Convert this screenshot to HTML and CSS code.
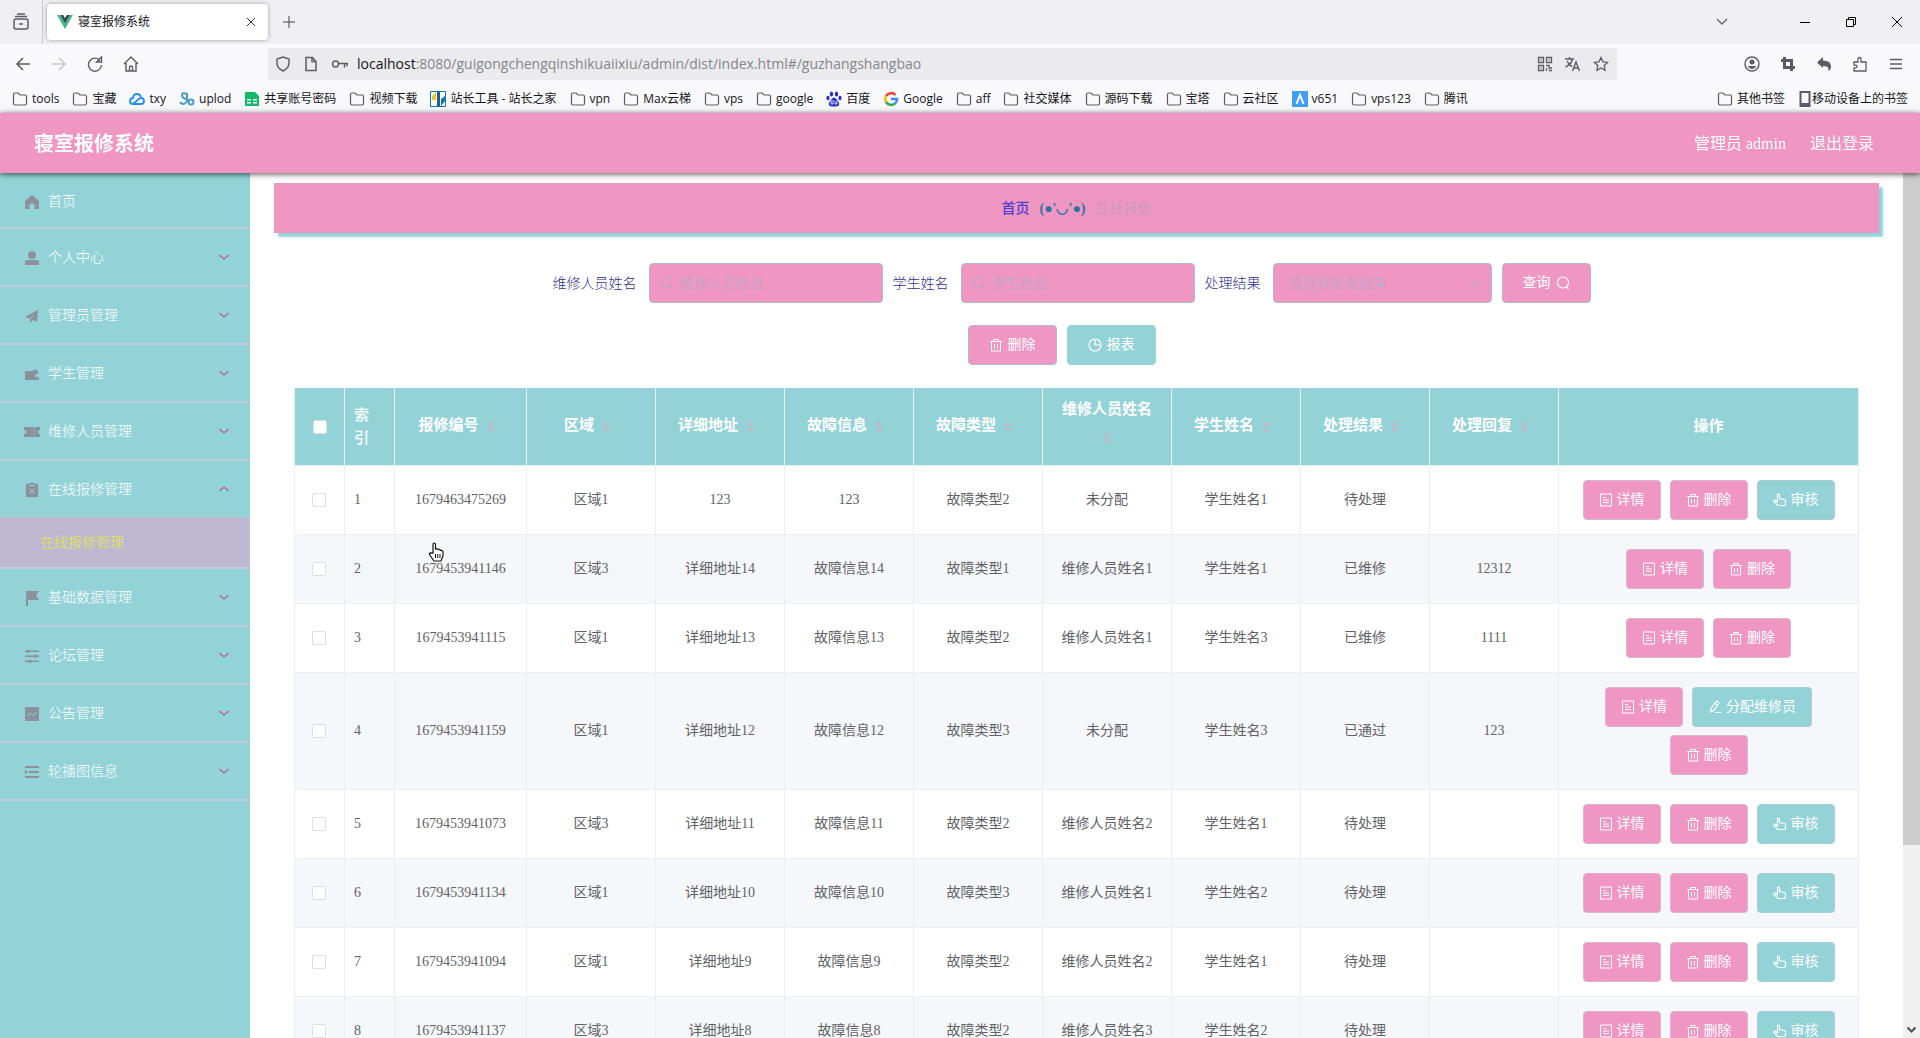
FILE: index.html
```html
<!DOCTYPE html>
<html lang="zh-CN">
<head>
<meta charset="utf-8">
<title>寝室报修系统</title>
<link rel="stylesheet" href="styles.css">
</head>
<body>
<svg class="sprite" aria-hidden="true">
  <symbol id="folder" viewBox="0 0 16 16"><path d="M1.500 3.500q0-1.500 1.500-1.500h3l2 2h5q1.500 0 1.500 1.500v7q0 1.500-1.500 1.500h-10q-1.500 0-1.500-1.500z" fill="none" stroke="#5b5b66" stroke-width="1.200"/></symbol>
  <symbol id="detail" viewBox="0 0 14 14"><path d="M1.500 1h11v12h-11zM4 4.500h3M4 7h6M4 9.500h6" fill="none" stroke="currentColor"/></symbol>
  <symbol id="trash" viewBox="0 0 14 14"><path d="M1 3.500h12M4.500 3V1.500h5V3M2.500 3.500V13h9V3.500M5.500 6v4.500M8.500 6v4.500" fill="none" stroke="currentColor"/></symbol>
  <symbol id="point" viewBox="0 0 14 14"><path d="M4.500 9.500V2q0-1 1-1t1 1v3.500l5 1q1 .3 1 1.300v3q0 1.700-1.700 1.700H6q-1.500 0-2.300-1.200L1 8.500q-.3-1 .6-1.300.8-.2 1.500.4l1.400 1.900" fill="none" stroke="currentColor" stroke-width="1.200"/></symbol>
  <symbol id="edit" viewBox="0 0 14 14"><path d="M3 8.500l5-7q.5-.6 1.200-.2l1.300 1q.6.500.2 1.200l-5 7L2.500 12zM7 3.500l2.500 2M7 12.500h6" fill="none" stroke="currentColor" stroke-width="1.200"/></symbol>
  <symbol id="pie" viewBox="0 0 14 14"><circle cx="7" cy="7" r="6" fill="none" stroke="currentColor" stroke-width="1.200"/><path d="M7 1v6h6" fill="none" stroke="currentColor" stroke-width="1.200"/></symbol>
  <symbol id="search" viewBox="0 0 14 14"><circle cx="7" cy="6.500" r="5.500" fill="none" stroke="currentColor" stroke-width="1.200"/><path d="M10 10.500l2.500 2.500" stroke="currentColor" stroke-width="1.200"/></symbol>
  <symbol id="down" viewBox="0 0 12 12"><path d="M1.500 4l4.500 4 4.500-4" fill="none" stroke="currentColor" stroke-width="1.300"/></symbol>
  <symbol id="up" viewBox="0 0 12 12"><path d="M1.500 8L6 4l4.500 4" fill="none" stroke="currentColor" stroke-width="1.300"/></symbol>
  <symbol id="sort" viewBox="0 0 10 14"><path d="M5 1l4 5H1zM5 13l4-5H1z" fill="currentColor"/></symbol>
</svg>

<div class="shell">
  <div class="tabs">
    <button class="ico recent" aria-label="最近标签"><svg width="16" height="18" viewBox="0 0 16 18" fill="none" stroke="#5b5b66" stroke-width="1.500"><rect x="1" y="6" width="14" height="10" rx="2"/><path d="M2 3.500h12M4 1h8M6 11h4"/></svg></button>
    <div class="tab">
      <svg width="16" height="16" viewBox="0 0 16 16"><path d="M0 1h3.200L8 9.500 12.800 1H16L8 15z" fill="#41b883"/><path d="M3.200 1h3L8 4l1.800-3h3L8 9.500z" fill="#34495e"/></svg>
      <span class="tab-title">寝室报修系统</span>
      <button class="ico" aria-label="关闭标签"><svg width="10" height="10" viewBox="0 0 10 10"><path d="M1 1l8 8M9 1L1 9" stroke="#333"/></svg></button>
    </div>
    <button class="ico plus" aria-label="新标签"><svg width="12" height="12" viewBox="0 0 12 12"><path d="M6 0v12M0 6h12" stroke="#444"/></svg></button>
    <div class="window-keys">
      <button class="ico" aria-label="标签列表"><svg width="12" height="12" viewBox="0 0 12 12"><path d="M1 3l5 5 5-5" fill="none" stroke="#666" stroke-width="1.300"/></svg></button>
      <button class="ico wide" aria-label="最小化"><svg width="10" height="10" viewBox="0 0 10 10"><path d="M0 5.500h10" stroke="#000"/></svg></button>
      <button class="ico" aria-label="还原"><svg width="10" height="10" viewBox="0 0 10 10"><path d="M.5 2.500h7v7h-7zM2.500 2.500v-2h7v7h-2" fill="none" stroke="#000"/></svg></button>
      <button class="ico" aria-label="关闭"><svg width="10" height="10" viewBox="0 0 10 10"><path d="M0 0l10 10M10 0L0 10" stroke="#000"/></svg></button>
    </div>
  </div>

  <div class="toolbar">
    <div class="nav-keys">
      <button class="ico" aria-label="后退"><svg width="16" height="16" viewBox="0 0 16 16"><path d="M15 8H2M8 2L2 8l6 6" fill="none" stroke="#5b5b66" stroke-width="1.500"/></svg></button>
      <button class="ico" aria-label="前进"><svg width="16" height="16" viewBox="0 0 16 16"><path d="M1 8h13M8 2l6 6-6 6" fill="none" stroke="#c4c4ca" stroke-width="1.500"/></svg></button>
      <button class="ico" aria-label="刷新"><svg width="16" height="16" viewBox="0 0 16 16"><path d="M13 4.500A6.500 6.500 0 1 0 14.500 9M14.500 1v5h-5z" fill="none" stroke="#5b5b66" stroke-width="1.400"/></svg></button>
      <button class="ico" aria-label="主页"><svg width="16" height="16" viewBox="0 0 16 16"><path d="M1 8l7-7 7 7M3 7v8h10V7M6.500 15v-4q0-1 1.500-1t1.500 1v4" fill="none" stroke="#5b5b66" stroke-width="1.400"/></svg></button>
    </div>
    <div class="url">
      <svg width="16" height="16" viewBox="0 0 16 16"><path d="M8 1l6 2v4q0 5-6 8-6-3-6-8V3z" fill="none" stroke="#5b5b66" stroke-width="1.400"/></svg>
      <svg width="16" height="16" viewBox="0 0 16 16"><path d="M3 1.500h6.500l3.500 4v9H3zM9 1.500v4h4" fill="none" stroke="#5b5b66" stroke-width="1.500"/></svg>
      <svg width="18" height="16" viewBox="0 0 18 16"><circle cx="4.500" cy="8" r="3" fill="none" stroke="#5b5b66" stroke-width="1.400"/><path d="M7.500 7.500H17M13.500 7.500v4M16 7.500v3" stroke="#5b5b66" stroke-width="1.400"/></svg>
      <span class="address"><b>localhost</b>:8080/guigongchengqinshikuaiixiu/admin/dist/index.html#/guzhangshangbao</span>
      <svg width="16" height="16" viewBox="0 0 16 16" fill="none" stroke="#5b5b66" stroke-width="1.300"><path d="M1.500 1.500h5v5h-5zM9.500 1.500h5v5h-5zM1.500 9.500h5v5h-5zM3.500 4h1M11.500 4h1M3.500 12h1M9 9.500h3v2.500h3M9.500 12v3M12 14.500h3"/></svg>
      <svg width="16" height="16" viewBox="0 0 16 16" fill="none" stroke="#5b5b66" stroke-width="1.400"><path d="M0 3h9M4.500 1v2M7.500 3q-1 5-7 8M2 5q2 4 5 5.500M7.500 15l3.500-9 3.500 9M9 12h4"/></svg>
      <svg width="16" height="16" viewBox="0 0 16 16"><path d="M8 1.500l2 4.300 4.700.6-3.500 3.200.9 4.700L8 12l-4.100 2.300.9-4.700L1.300 6.400 6 5.800z" fill="none" stroke="#5b5b66" stroke-width="1.300"/></svg>
    </div>
    <div class="tools">
      <button class="ico" aria-label="账户"><svg width="16" height="16" viewBox="0 0 16 16"><circle cx="8" cy="8" r="7" fill="none" stroke="#5b5b66" stroke-width="1.400"/><circle cx="8" cy="6" r="2.500" fill="#5b5b66"/><path d="M4 10h8q-1 3-4 3t-4-3z" fill="#5b5b66"/></svg></button>
      <button class="ico" aria-label="截图"><svg width="16" height="16" viewBox="0 0 16 16"><path d="M4.500 1v10.500H15M1 4.500h10.500V15" fill="none" stroke="#5b5b66" stroke-width="3"/></svg></button>
      <button class="ico" aria-label="撤销"><svg width="16" height="16" viewBox="0 0 16 16"><path d="M1 6.500L7 1v3.500q8 0 8 6 0 3-3 4.500 2-5-5-5V12z" fill="#5b5b66"/></svg></button>
      <button class="ico" aria-label="扩展"><svg width="16" height="16" viewBox="0 0 16 16"><path d="M2 6h4V3q0-1.500 1.500-1.500T9 3v3h5v9H2v-3q3 0 3-1.500T2 9z" fill="none" stroke="#5b5b66" stroke-width="1.300"/></svg></button>
      <button class="ico" aria-label="菜单"><svg width="16" height="16" viewBox="0 0 16 16"><path d="M2 3.500h12M2 8h12M2 12.500h12" stroke="#5b5b66" stroke-width="1.300"/></svg></button>
    </div>
  </div>

  <nav class="bookmarks" aria-label="书签">
    <a href="#"><svg><use href="#folder"/></svg>tools</a>
    <a href="#"><svg><use href="#folder"/></svg>宝藏</a>
    <a href="#"><svg viewBox="0 0 16 16"><path d="M4 13q-3 0-3-3t3-3q.5-4 4-4t4 4q3 0 3 3t-3 3zL11 7" fill="none" stroke="#1e90ee" stroke-width="1.800"/></svg>txy</a>
    <a href="#"><svg viewBox="0 0 16 16" fill="none" stroke="#4a9cc8" stroke-width="2"><path d="M8 3Q3 1 3 4t4 4-2 5q-3 0-4-2"/><circle cx="12" cy="11" r="2.500"/><path d="M8 2v9"/></svg>uplod</a>
    <a href="#"><svg viewBox="0 0 16 16"><path d="M1 1h10l4 4v10H1z" fill="#13b96b"/><path d="M3 8h4v1.500H3zM9 8h4v1.500H9zM3 11h4v1.500H3zM9 11h4v1.500H9z" fill="#fff"/></svg>共享账号密码</a>
    <a href="#"><svg><use href="#folder"/></svg>视频下载</a>
    <a href="#"><svg viewBox="0 0 16 16"><path d="M.5.5h15v15H.5z" fill="#fff" stroke="#1673b4"/><path d="M2 5l4-4v8H2z" fill="#e5ce20"/><path d="M7 1h3v14H7z" fill="#1f5f8c"/><path d="M11 8l4-3v5l-4 5z" fill="#1673b4"/></svg>站长工具 - 站长之家</a>
    <a href="#"><svg><use href="#folder"/></svg>vpn</a>
    <a href="#"><svg><use href="#folder"/></svg>Max云梯</a>
    <a href="#"><svg><use href="#folder"/></svg>vps</a>
    <a href="#"><svg><use href="#folder"/></svg>google</a>
    <a href="#"><svg viewBox="0 0 16 16" fill="#2b32c8"><ellipse cx="5.500" cy="3" rx="1.700" ry="2.500"/><ellipse cx="10.500" cy="3" rx="1.700" ry="2.500"/><ellipse cx="2" cy="7" rx="1.600" ry="2.200"/><ellipse cx="14" cy="7" rx="1.600" ry="2.200"/><path d="M8 6.500q2 0 3 2.500l2 2.500q1 4-3 4H6q-4 0-3-4L5 9q1-2.500 3-2.500z"/><path d="M6 10h-1v3h2v-4M9 10v3h2v-3" fill="none" stroke="#fff" stroke-width=".8"/></svg>百度</a>
    <a href="#"><svg viewBox="0 0 16 16" fill="none" stroke-width="2.500"><path d="M12.500 4A6 6 0 0 0 3 5" stroke="#ea4335"/><path d="M3 5a6 6 0 0 0 0 6" stroke="#fbbc05"/><path d="M3 11a6 6 0 0 0 9 1.500" stroke="#34a853"/><path d="M12 12.500Q14 11 14 8H8" stroke="#4285f4"/></svg>Google</a>
    <a href="#"><svg><use href="#folder"/></svg>aff</a>
    <a href="#"><svg><use href="#folder"/></svg>社交媒体</a>
    <a href="#"><svg><use href="#folder"/></svg>源码下载</a>
    <a href="#"><svg><use href="#folder"/></svg>宝塔</a>
    <a href="#"><svg><use href="#folder"/></svg>云社区</a>
    <a href="#"><svg viewBox="0 0 16 16"><path d="M0 0h16v16H0z" fill="#3ea0ee"/><path d="M4.500 13L8 4l3.500 9" fill="none" stroke="#fff" stroke-width="2"/></svg>v651</a>
    <a href="#"><svg><use href="#folder"/></svg>vps123</a>
    <a href="#"><svg><use href="#folder"/></svg>腾讯</a>
    <a href="#" class="push"><svg><use href="#folder"/></svg>其他书签</a>
    <a href="#" class="phone"><svg viewBox="0 0 12 16"><path d="M1.500 1h9v14h-9z" fill="none" stroke="#5b5b66" stroke-width="2"/><path d="M1 12h10v3H1z" fill="#5b5b66"/></svg>移动设备上的书签</a>
  </nav>

  <header class="header">
    <h1>寝室报修系统</h1>
    <span class="user">管理员 admin</span>
    <a href="#" class="logout">退出登录</a>
  </header>

  <div class="body">
    <aside class="side">
      <ul class="menu">
        <li class="home"><a href="#"><svg viewBox="0 0 16 16"><path d="M8 1l7 6v8h-4.500v-4q0-1.500-2.500-1.500T5.500 11v4H1V7z"/></svg><span>首页</span></a></li>
        <li><a href="#"><svg viewBox="0 0 16 16"><circle cx="8" cy="5" r="4"/><path d="M1 15v-2q0-3 3-3h8q3 0 3 3v2z"/></svg><span>个人中心</span><svg class="arrow"><use href="#down"/></svg></a></li>
        <li><a href="#"><svg viewBox="0 0 16 16"><path d="M1 9L14 2l-1 12-4-2-3 3v-4l5-5-6 4.500z"/></svg><span>管理员管理</span><svg class="arrow"><use href="#down"/></svg></a></li>
        <li><a href="#"><svg viewBox="0 0 16 16"><path d="M1 5h8l2-2 3 2v3q-3-1-3 1.500t3 1.500h1v3H1z"/></svg><span>学生管理</span><svg class="arrow"><use href="#down"/></svg></a></li>
        <li><a href="#"><svg viewBox="0 0 16 16"><path d="M0 3h16v3q-2 0-2 2t2 2v3H0v-3q2 0 2-2T0 6z"/><path d="M10.500 3v10" stroke="#93d3d8" stroke-width=".5" stroke-dasharray="2 1"/></svg><span>维修人员管理</span><svg class="arrow"><use href="#down"/></svg></a></li>
        <li>
          <a href="#"><svg viewBox="0 0 16 16"><path d="M2 2h3V1h6v1h3v13H2z"/><path d="M5.500 6.500l5 5M10.500 6.500l-5 5M5 3.500h6" stroke="#93d3d8"/></svg><span>在线报修管理</span><svg class="arrow"><use href="#up"/></svg></a>
          <a href="#" class="sub">在线报修管理</a>
        </li>
        <li><a href="#"><svg viewBox="0 0 16 16"><path d="M2 1h13l-3 4 3 5H4v6H2z"/></svg><span>基础数据管理</span><svg class="arrow"><use href="#down"/></svg></a></li>
        <li><a href="#"><svg viewBox="0 0 16 16"><path d="M1 2.500h14v1.500H1zM1 7.500h14v1.500H1zM1 12.500h14V14H1z"/><circle cx="4" cy="3.200" r="1.700"/><circle cx="11" cy="8.200" r="1.700"/><circle cx="6" cy="13.200" r="1.700"/></svg><span>论坛管理</span><svg class="arrow"><use href="#down"/></svg></a></li>
        <li><a href="#"><svg viewBox="0 0 16 16"><path d="M1 1h14v14H1z"/><path d="M3.500 10l3-3 2.500 2.500L13 6" fill="none" stroke="#93d3d8"/></svg><span>公告管理</span><svg class="arrow"><use href="#down"/></svg></a></li>
        <li><a href="#"><svg viewBox="0 0 16 16"><path d="M1 2h14v2H1zM5 7h10v2H5zM1 6l3 2-3 2zM1 12h14v2H1z"/></svg><span>轮播图信息</span><svg class="arrow"><use href="#down"/></svg></a></li>
      </ul>
    </aside>

    <main class="main">
      <nav class="crumbs"><a href="#">首页</a><b>(●'◡'●)</b><span>在线报修</span></nav>
      <div class="content">
        <form class="filters">
          <label for="worker">维修人员姓名</label>
          <span class="field"><svg><use href="#search"/></svg><input id="worker" type="text" placeholder="维修人员姓名"></span>
          <label for="student">学生姓名</label>
          <span class="field"><svg><use href="#search"/></svg><input id="student" type="text" placeholder="学生姓名"></span>
          <label for="result">处理结果</label>
          <span class="field pick"><select id="result"><option>请选择处理结果</option></select><svg><use href="#down"/></svg></span>
          <button type="button" class="btn big">查询<svg><use href="#search"/></svg></button>
        </form>
        <div class="actions">
          <button class="btn big"><svg><use href="#trash"/></svg>删除</button>
          <button class="btn big teal"><svg><use href="#pie"/></svg>报表</button>
        </div>
        <table class="grid">
          <colgroup><col class="c-s"><col class="c-s"><col class="c-id"><col><col><col><col><col><col><col><col><col class="c-ops"></colgroup>
          <thead><tr>
            <th><input type="checkbox" aria-label="全选"></th><th class="idx">索引</th>
            <th>报修编号<i><svg><use href="#sort"/></svg></i></th><th>区域<i><svg><use href="#sort"/></svg></i></th><th>详细地址<i><svg><use href="#sort"/></svg></i></th><th>故障信息<i><svg><use href="#sort"/></svg></i></th><th>故障类型<i><svg><use href="#sort"/></svg></i></th><th>维修人员姓名<i><svg><use href="#sort"/></svg></i></th><th>学生姓名<i><svg><use href="#sort"/></svg></i></th><th>处理结果<i><svg><use href="#sort"/></svg></i></th><th>处理回复<i><svg><use href="#sort"/></svg></i></th><th>操作</th>
          </tr></thead>
          <tbody>
            <tr><td><input type="checkbox" aria-label="选择1"></td><td class="idx">1</td><td>1679463475269</td><td>区域1</td><td>123</td><td>123</td><td>故障类型2</td><td>未分配</td><td>学生姓名1</td><td>待处理</td><td></td><td><div class="ops"><button class="btn"><svg><use href="#detail"/></svg>详情</button><button class="btn"><svg><use href="#trash"/></svg>删除</button><button class="btn teal"><svg><use href="#point"/></svg>审核</button></div></td></tr>
            <tr><td><input type="checkbox" aria-label="选择2"></td><td class="idx">2</td><td>1679453941146</td><td>区域3</td><td>详细地址14</td><td>故障信息14</td><td>故障类型1</td><td>维修人员姓名1</td><td>学生姓名1</td><td>已维修</td><td>12312</td><td><div class="ops"><button class="btn"><svg><use href="#detail"/></svg>详情</button><button class="btn"><svg><use href="#trash"/></svg>删除</button></div></td></tr>
            <tr><td><input type="checkbox" aria-label="选择3"></td><td class="idx">3</td><td>1679453941115</td><td>区域1</td><td>详细地址13</td><td>故障信息13</td><td>故障类型2</td><td>维修人员姓名1</td><td>学生姓名3</td><td>已维修</td><td>1111</td><td><div class="ops"><button class="btn"><svg><use href="#detail"/></svg>详情</button><button class="btn"><svg><use href="#trash"/></svg>删除</button></div></td></tr>
            <tr><td><input type="checkbox" aria-label="选择4"></td><td class="idx">4</td><td>1679453941159</td><td>区域1</td><td>详细地址12</td><td>故障信息12</td><td>故障类型3</td><td>未分配</td><td>学生姓名3</td><td>已通过</td><td>123</td><td><div class="ops"><button class="btn"><svg><use href="#detail"/></svg>详情</button><button class="btn teal"><svg><use href="#edit"/></svg>分配维修员</button><button class="btn"><svg><use href="#trash"/></svg>删除</button></div></td></tr>
            <tr><td><input type="checkbox" aria-label="选择5"></td><td class="idx">5</td><td>1679453941073</td><td>区域3</td><td>详细地址11</td><td>故障信息11</td><td>故障类型2</td><td>维修人员姓名2</td><td>学生姓名1</td><td>待处理</td><td></td><td><div class="ops"><button class="btn"><svg><use href="#detail"/></svg>详情</button><button class="btn"><svg><use href="#trash"/></svg>删除</button><button class="btn teal"><svg><use href="#point"/></svg>审核</button></div></td></tr>
            <tr><td><input type="checkbox" aria-label="选择6"></td><td class="idx">6</td><td>1679453941134</td><td>区域1</td><td>详细地址10</td><td>故障信息10</td><td>故障类型3</td><td>维修人员姓名1</td><td>学生姓名2</td><td>待处理</td><td></td><td><div class="ops"><button class="btn"><svg><use href="#detail"/></svg>详情</button><button class="btn"><svg><use href="#trash"/></svg>删除</button><button class="btn teal"><svg><use href="#point"/></svg>审核</button></div></td></tr>
            <tr><td><input type="checkbox" aria-label="选择7"></td><td class="idx">7</td><td>1679453941094</td><td>区域1</td><td>详细地址9</td><td>故障信息9</td><td>故障类型2</td><td>维修人员姓名2</td><td>学生姓名1</td><td>待处理</td><td></td><td><div class="ops"><button class="btn"><svg><use href="#detail"/></svg>详情</button><button class="btn"><svg><use href="#trash"/></svg>删除</button><button class="btn teal"><svg><use href="#point"/></svg>审核</button></div></td></tr>
            <tr><td><input type="checkbox" aria-label="选择8"></td><td class="idx">8</td><td>1679453941137</td><td>区域3</td><td>详细地址8</td><td>故障信息8</td><td>故障类型2</td><td>维修人员姓名3</td><td>学生姓名2</td><td>待处理</td><td></td><td><div class="ops"><button class="btn"><svg><use href="#detail"/></svg>详情</button><button class="btn"><svg><use href="#trash"/></svg>删除</button><button class="btn teal"><svg><use href="#point"/></svg>审核</button></div></td></tr>
          </tbody>
        </table>
      </div>
    </main>
    <div class="scroll" aria-hidden="true"><div class="thumb"></div><svg width="11" height="8" viewBox="0 0 11 8"><path d="M1.500 1.500l4 4 4-4" fill="none" stroke="#505050" stroke-width="2"/></svg></div>
  </div>
</div>
<svg class="cursor" width="16" height="20" viewBox="0 0 16 20" aria-hidden="true"><path d="M5 11V2.500Q5 1 6.200 1t1.300 1.500V7q2-.8 2.500.6 2-.5 2.500.8 2-.4 2.500 1.300V14l-2 5H6L1.500 12.500Q1 11 2.500 10.800z" fill="#fff" stroke="#111" stroke-width="1.200"/><path d="M7.500 12v4M9.800 12v4M12 12v4" stroke="#111"/></svg>
</body>
</html>
```
FILE: styles.css
```css
:root {
  --pink: #ef96c3;
  --teal: #93d3d8;
  --line: #ebeef5;
  --faint: #c8a3c8;
}
* { box-sizing: border-box; }
body {
  margin: 0;
  font: 14px/20px "Liberation Serif", "Noto Sans CJK SC", serif;
  color: #606266;
}
a { color: inherit; text-decoration: none; }
button, input, select { font: inherit; color: inherit; }
.sprite { position: absolute; width: 0; height: 0; }
.shell { display: flex; flex-direction: column; height: 100vh; overflow: hidden; }

/* browser frame */
.tabs, .toolbar, .bookmarks {
  display: flex;
  align-items: center;
  flex: none;
  font: 12px/16px "Open Sans", "Noto Sans CJK SC", sans-serif;
  color: #15141a;
  background: #f9f9fb;
}
.tabs { height: 44px; background: #f0f0f4; }
.ico {
  display: flex;
  align-items: center;
  justify-content: center;
  padding: 0;
  border: 0;
  background: none;
}
.recent { width: 43px; height: 44px; border-right: 1px solid #c8c8ce; }
.tab {
  display: flex;
  align-items: center;
  gap: 5px;
  width: 221px;
  height: 36px;
  margin-left: 4px;
  padding: 0 12px 0 10px;
  background: #fff;
  border-radius: 4px;
  box-shadow: 0 0 4px rgba(0, 0, 0, .35);
}
.tab-title { flex: 1; }
.plus { width: 42px; }
.window-keys { display: flex; margin-left: auto; }
.window-keys .ico { width: 46px; }
.window-keys .wide { margin-left: 37px; }
.toolbar { height: 40px; }
.nav-keys { display: flex; gap: 20px; padding-left: 15px; width: 268px; }
.url {
  display: flex;
  align-items: center;
  flex: 1;
  gap: 12px;
  height: 32px;
  padding: 0 8px 0 7px;
  background: #ebebed;
}
.address { flex: 1; margin-left: -4px; font-size: 14px; color: #85858c; }
.address b { font-weight: 400; color: #15141a; }
.tools { display: flex; gap: 20px; justify-content: flex-end; width: 303px; padding-right: 16px; }
.bookmarks { height: 29px; gap: 13px; padding: 0 12px; }
.bookmarks a { display: flex; align-items: center; gap: 4px; white-space: nowrap; }
.bookmarks svg { width: 16px; height: 16px; }
.bookmarks .push { margin-left: auto; }
.bookmarks .phone { gap: 0; }
.bookmarks .phone svg { width: 14px; }

/* application header */
.header {
  position: relative;
  display: flex;
  align-items: center;
  flex: none;
  height: 60px;
  padding: 2px 46px 0 34px;
  background: var(--pink);
  box-shadow: 0 1px 6px rgba(0, 0, 0, .7);
  color: #fff;
  font-size: 16px;
}
.header h1 { flex: 1; margin: 0; font-size: 20px; font-weight: 700; line-height: 28px; }
.logout { margin-left: 24px; }

.body { display: flex; flex: 1; min-height: 0; }
.side { flex: none; width: 250px; background: var(--teal); color: #fff; }
.menu { margin: 0; padding: 0; list-style: none; }
.menu li { background: linear-gradient(#bfcbd8, #bfcbd8) left bottom / 248px 2px no-repeat; padding-bottom: 2px; }
.menu a { display: flex; align-items: center; height: 56px; padding: 2px 20px 0 24px; font-weight: 300; }
.menu .home a { height: 54px; padding-top: 4px; }
.menu svg { width: 16px; height: 16px; margin-right: 8px; fill: #8a929f; }
.menu span { flex: 1; }
.menu .arrow { width: 12px; height: 12px; margin: 0 0 2px; color: #b5629c; }
.menu .sub { height: 50px; padding-left: 40px; background: #bfb8d2; color: #e3ec3c; }

.main { flex: 1; min-width: 0; overflow: auto; scrollbar-width: none; padding: 10px 24px 0; background: #fff; }
.crumbs {
  display: flex;
  align-items: center;
  justify-content: center;
  gap: 10px;
  height: 50px;
  padding-top: 2px;
  background: var(--pink);
  box-shadow: 4px 4px 2px var(--teal);
}
.crumbs a { color: #4a3fd2; font-weight: 500; }
.crumbs b { color: #2a75a0; }
.crumbs span { color: #c99abb; }
.content { padding: 30px 20px 0; }
.filters { display: flex; justify-content: center; align-items: center; gap: 10px; padding-right: 10px; }
.filters label { margin-right: 2px; padding-top: 2px; color: #2f2f92; font-weight: 300; }
.field { position: relative; display: block; width: 234px; }
.pick { width: 219px; }
.field input, .field select {
  display: block;
  width: 100%;
  height: 40px;
  padding: 2px 30px 0;
  background: var(--pink);
  border: 1px solid #a9bdd0;
  border-radius: 4px;
  color: var(--faint);
  appearance: none;
}
.field select { padding: 2px 15px 0; }
.field input::placeholder { color: var(--faint); opacity: 1; }
.field svg { position: absolute; left: 10px; top: 13px; width: 14px; height: 14px; color: var(--faint); }
.pick svg { left: auto; right: 10px; }
.actions { display: flex; justify-content: center; gap: 10px; padding: 22px 30px 23px 0; }
.btn {
  display: inline-flex;
  align-items: center;
  gap: 4px;
  height: 40px;
  padding: 0 15px;
  border: 1px solid #d5b5cf;
  border-radius: 4px;
  background: var(--pink);
  color: #fff;
}
.btn svg { width: 14px; height: 14px; }
.btn.teal { background: var(--teal); border-color: #a9ccd6; }
.btn.big { gap: 5px; padding: 0 20px; border-color: #a9bdd0; }
.btn.big.teal { border-color: var(--teal); }

/* report list */
.grid { width: 100%; table-layout: fixed; border-collapse: separate; border-spacing: 0; border-left: 1px solid var(--line); }
.c-s { width: 50px; }
.c-id { width: 132px; }
.c-ops { width: 300px; }
.grid th, .grid td { padding: 0 9px; text-align: center; border-right: 1px solid var(--line); border-bottom: 1px solid var(--line); }
.grid th {
  height: 78px;
  padding: 4px 9px;
  background: var(--teal);
  color: #fff;
  font-size: 15px;
  line-height: 23px;
}
.grid .idx { text-align: left; }
.grid th.idx { font-weight: 500; padding-right: 18px; }
.grid th i { display: inline-flex; justify-content: center; align-items: center; width: 24px; height: 34px; vertical-align: middle; color: #b9bccb; }
.grid th svg { width: 10px; height: 14px; }
.grid td { padding: 14px 9px; }
.grid tr:nth-child(even) td { background: #f5f7fa; }
.grid input {
  display: block;
  width: 14px;
  height: 14px;
  margin: 0 auto;
  appearance: none;
  border: 1px solid #dcdfe6;
  border-radius: 2px;
  background: #fff;
}
.grid td input { margin-left: 8px; }
.ops { display: flex; flex-wrap: wrap; justify-content: center; gap: 8px 9px; }

.scroll { display: flex; flex-direction: column; justify-content: space-between; align-items: center; flex: none; width: 17px; padding-bottom: 4px; background: #f0f0f0; }
.thumb { width: 100%; height: 78%; background: #cdcdcd; }
.cursor { position: absolute; left: 428px; top: 542px; }
```
